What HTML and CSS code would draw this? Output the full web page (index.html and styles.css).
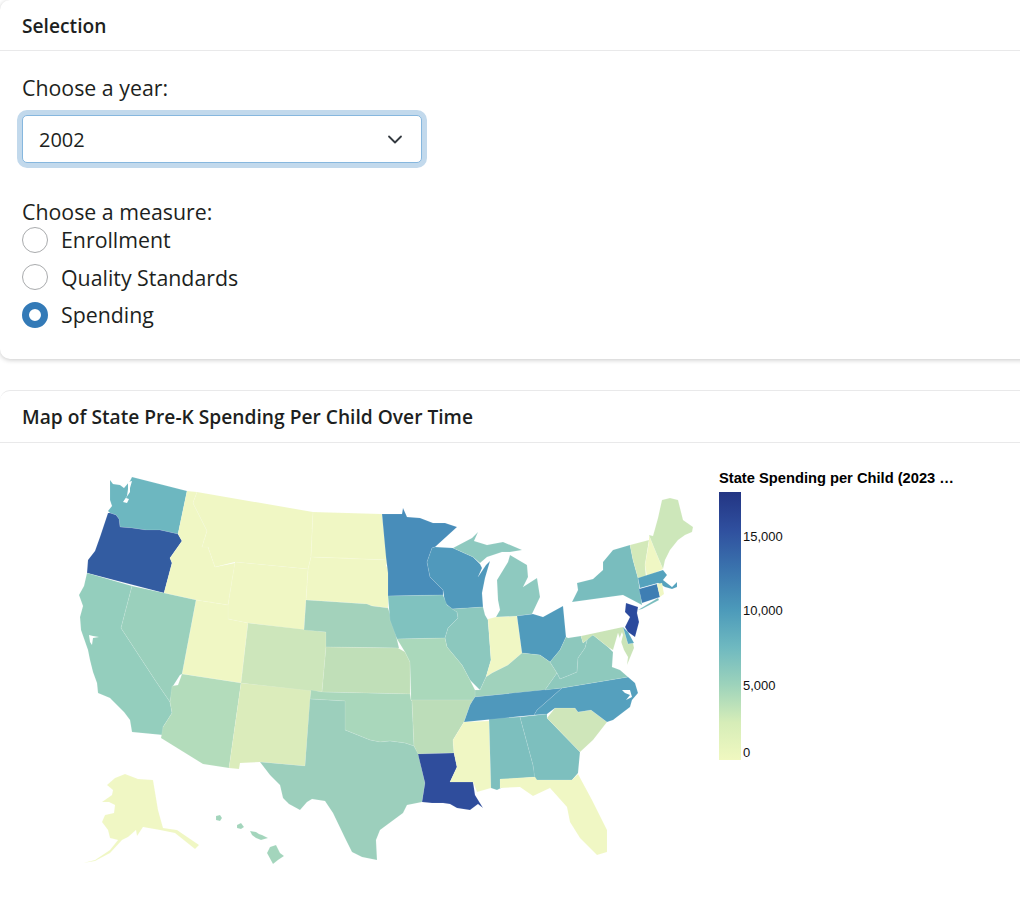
FILE: index.html
```html
<!DOCTYPE html>
<html lang="en">
<head>
    <meta charset="UTF-8">
    <title>State Pre-K Spending</title>
    <link rel="stylesheet" href="styles.css">
</head>
<body>

    <!-- Selection card -->
    <section class="card card-raised">
        <div class="card-header">Selection</div>
        <div class="card-body">
            <label class="field-label" for="year">Choose a year:</label>
            <div class="select-box" id="year">
                <span>2002</span>
                <svg class="chevron" viewBox="0 0 16 16"><path d="M2 5.500l6 6 6-6"/></svg>
            </div>
            <div class="field-label measure-label">Choose a measure:</div>
            <div class="radio-row"><span class="radio"></span>Enrollment</div>
            <div class="radio-row"><span class="radio"></span>Quality Standards</div>
            <div class="radio-row"><span class="radio radio-on"></span>Spending</div>
        </div>
    </section>

    <!-- Map card -->
    <section class="card card-map">
        <div class="card-header">Map of State Pre-K Spending Per Child Over Time</div>
        <svg class="map" viewBox="0 443 1020 469" width="1020" height="469">
            <defs>
                <linearGradient id="ramp" x1="0" y1="1" x2="0" y2="0">
                    <stop offset="0" stop-color="#f0f8c0"/>
                    <stop offset="0.14" stop-color="#d6edb8"/>
                    <stop offset="0.28" stop-color="#9dd3bb"/>
                    <stop offset="0.42" stop-color="#6fb9c0"/>
                    <stop offset="0.56" stop-color="#4c9aba"/>
                    <stop offset="0.72" stop-color="#3a72ad"/>
                    <stop offset="0.86" stop-color="#2f4f9e"/>
                    <stop offset="1" stop-color="#233583"/>
                </linearGradient>
            </defs>

            <g class="states">
                <!-- west -->
                <path fill="#6db7c0" d="M110 480L113 484L120 485L124 488L130 481L132 477L187 491L178 534L160 530L146 530L132 528L120 527L119 519L116 515L110 513L108 511L112 506L110 500L110 493Z"/>
                <path fill="#335ca1" d="M108 513L110 513L116 515L119 519L120 527L132 528L146 530L160 530L178 534L182 541L170 558L172 563L164 593L87 573L88 560L95 551L100 537L104 525Z"/>
                <path fill="#f0f7c4" d="M187 491L197 492L193 503L207 531L202 547L208 547L215 567L235 563L228 605L196 600L164 593L172 563L170 558L182 541L178 534Z"/>
                <path fill="#f0f7c4" d="M197 492L313 512L311 557L308 569L235 562L215 567L208 547L202 547L207 531L193 503Z"/>
                <path fill="#f0f7c4" d="M313 512L382 514L385 540L388 560L311 557Z"/>
                <path fill="#f0f7c4" d="M311 557L388 560L386 566L389 568L388 608L380 607L372 606L367 604L306 600L308 569Z"/>
                <path fill="#f0f7c4" d="M235 562L308 569L306 600L304 630L248 623L228 619L228 605Z"/>
                <path fill="#f0f7c4" d="M196 600L228 605L228 619L248 623L241 683L182 674Z"/>
                <path fill="#94cebd" d="M87 573L132 586L121 628L155 680L170 702L172 713L163 727L163 735L132 732L130 720L124 712L110 698L98 693L97 683L93 672L90 660L88 650L81 630L80 617L83 606L79 595L84 586Z"/>
                <path fill="#9ad0bc" d="M132 586L196 600L182 674L180 675L173 686L170 702L155 680L121 628Z"/>
                <path fill="#b3dcbb" d="M182 674L241 683L229 768L203 764L161 738L163 727L172 713L170 702L172 686L178 685Z"/>
                <path fill="#dbecbb" d="M241 683L311 690L305 766L260 762L240 763L239 769L229 768Z"/>
                <path fill="#cde6bb" d="M248 623L326 632L326 647L322 692L241 683Z"/>
                <path fill="#a3d2bb" d="M306 600L367 604L372 606L380 607L388 608L393 623L399 648L326 647L326 632L304 630Z"/>
                <path fill="#c0dfb8" d="M326 647L398 648L405 652L410 662L410 694L322 692Z"/>
                <path fill="#a9d7bb" d="M311 690L322 692L410 694L411 700L412 701L414 746L405 743L390 741L380 742L370 740L360 736L345 730L345 701L310 699Z"/>
                <path fill="#9ccfbc" d="M310 699L345 701L345 730L360 736L370 740L380 742L390 741L405 743L414 746L418 753L425 783L422 802L407 805L403 813L380 830L376 840L377 860L362 857L352 852L345 838L333 813L325 801L312 799L307 802L300 810L289 804L283 798L280 785L270 775L260 762L305 766Z"/>

                <!-- alaska and hawaii -->
                <path fill="#f0f7c4" d="M107 785L115 778L125 774L138 779L153 780L158 810L163 828L177 830L199 845L195 849L175 833L160 830L143 827L137 836L136 830L128 837L122 840L110 853L95 861L83 863L95 860L110 850L118 840L110 838L108 830L102 822L105 815L114 813L115 805L109 802L102 802L112 795L113 790Z"/>
                <path fill="#a3d5bc" d="M216 816L220 815L222 818L220 821L216 820Z"/>
                <path fill="#a3d5bc" d="M237 825L241 823L244 827L241 829L237 828Z"/>
                <path fill="#a3d5bc" d="M250 831L256 832L259 834L262 835L268 838L261 840L256 838L252 835Z"/>
                <path fill="#a3d5bc" d="M270 847L276 845L280 853L284 856L278 860L273 864L267 853Z"/>

                <!-- midwest -->
                <path fill="#488dba" d="M382 514L402 514L403 508L407 517L420 518L433 523L445 523L457 527L435 547L432 548L427 562L430 577L443 590L443 595L388 596L388 573L386 557Z"/>
                <path fill="#5099bc" d="M435 547L453 548L473 557L480 564L482 568L478 577L486 565L490 561L485 578L482 593L483 607L452 609L445 603L443 590L430 577L427 562L432 548Z"/>
                <path fill="#80c2bf" d="M388 596L443 595L447 605L457 612L458 618L448 628L445 638L397 639L390 620Z"/>
                <path fill="#8cc8be" d="M452 609L483 607L485 615L488 620L491 660L486 677L480 690L470 680L462 665L447 647L445 638L448 628L458 618L457 612Z"/>
                <path fill="#f0f7c4" d="M488 619L496 617L517 616L522 653L508 665L492 673L486 677L491 660Z"/>
                <path fill="#8ec9bf" d="M453 548L472 538L478 532L474 541L487 545L503 542L522 550L510 552L502 552L487 557L480 563L473 557Z"/>
                <path fill="#8ec9bf" d="M510 555L527 565L528 577L523 587L537 578L540 597L532 614L517 616L496 617L500 610L498 600L497 580L508 562Z"/>
                <path fill="#509bbc" d="M517 616L533 614L543 617L563 606L566 637L560 650L550 662L540 655L522 653Z"/>
                <path fill="#a0d2bc" d="M492 673L508 665L522 653L540 655L550 662L557 673L545 690L475 697L475 690L480 690L486 677Z"/>
                <path fill="#aad8bb" d="M397 639L445 638L447 647L462 665L470 680L475 690L475 697L473 700L411 700L410 662L405 652Z"/>
                <path fill="#bcddb9" d="M411 700L473 700L470 705L464 722L453 740L454 753L418 754L414 746L412 701Z"/>

                <!-- south -->
                <path fill="#2f4d9c" d="M418 754L454 753L457 767L450 782L473 782L475 795L483 808L478 804L470 810L457 808L450 804L443 803L432 803L422 802L425 783Z"/>
                <path fill="#f0f7c4" d="M464 722L489 721L491 788L477 792L473 782L450 782L457 767L454 753L453 740Z"/>
                <path fill="#7dbfbe" d="M489 718L520 717L533 765L535 777L500 780L503 787L497 790L491 788Z"/>
                <path fill="#7dbfbe" d="M520 717L547 714L547 718L580 752L578 773L572 780L535 780L533 765Z"/>
                <path fill="#f0f7c4" d="M500 779L535 777L537 780L572 780L578 774L592 800L607 830L607 852L597 855L580 838L570 822L567 807L550 788L533 796L520 787L500 788Z"/>
                <path fill="#cfe6ba" d="M547 718L555 708L575 708L578 712L591 710L607 722L593 740L580 752Z"/>
                <path fill="#55a0be" d="M534 715L537 710L562 688L628 677L635 683L638 693L632 700L630 707L613 720L607 722L591 710L578 712L575 708L555 708L547 714Z"/>
                <path fill="#4f98bc" d="M473 700L475 697L562 688L537 710L534 715L464 722L470 705Z"/>

                <!-- east -->
                <path fill="#8dc8bd" d="M550 662L560 650L566 637L568 638L581 636L583 643L593 635L588 637L585 648L578 658L577 672L570 675L560 679L557 673Z"/>
                <path fill="#8ec9bd" d="M593 635L608 647L613 652L612 667L620 670L628 677L562 688L545 690L557 673L560 679L570 675L577 672L578 658L585 648L588 637Z"/>
                <path fill="#cae4b7" d="M581 636L623 627L628 644L633 643L634 648L627 665L628 657L624 650L618 633L613 650L608 647L593 635L583 643Z"/>
                <path fill="#5ba9c1" d="M623 627L628 632L634 643L628 644Z"/>
                <path fill="#79bdbe" d="M572 602L578 590L577 583L593 579L603 570L603 562L613 550L630 545L633 560L638 578L642 605L623 595Z"/>
                <path fill="#79bdbe" d="M638 610L658 598L659 600L642 609Z"/>
                <path fill="#d3e9b9" d="M630 545L649 540L645 565L646 577L638 578L633 560Z"/>
                <path fill="#f0f7c4" d="M649 535L655 550L663 569L647 577L645 565L649 542Z"/>
                <path fill="#cde7ba" d="M649 535L653 536L658 518L662 500L670 498L678 500L683 520L693 527L692 532L685 535L678 540L670 550L665 560L663 569L655 550Z"/>
                <path fill="#55a2bd" d="M638 578L663 570L667 575L663 580L672 587L677 582L677 587L672 589L665 587L658 583L640 588Z"/>
                <path fill="#3e7eb3" d="M639 589L657 584L660 597L642 603Z"/>
                <path fill="#f0f7c4" d="M657 584L662 583L664 594L660 597Z"/>
                <path fill="#2b4a9d" d="M626 603L638 607L637 613L639 622L635 637L628 632L625 627L630 617L625 612Z"/>
            </g>

            <!-- water cut out of the coast -->
            <g class="water">
                <path d="M128 482L132 481L130 488L130 492L126 498L129 499L127 503L123 502L127 496L128 489Z"/>
                <path d="M89 635L93 636L99 637L93 638L92 645L90 642Z"/>
                <path d="M622 632L618 642L616 648L620 655L624 662L627 668L625 657L620 647L623 635Z"/>
                <path d="M622 690L630 690L632 697L626 700L630 695L625 693Z"/>
            </g>

            <!-- legend -->
            <text class="legend-title" x="719" y="483">State Spending per Child (2023 …</text>
            <rect x="719" y="492" width="22" height="268" fill="url(#ramp)"/>
            <text class="legend-tick" x="743" y="541">15,000</text>
            <text class="legend-tick" x="743" y="615">10,000</text>
            <text class="legend-tick" x="743" y="690">5,000</text>
            <text class="legend-tick" x="743" y="757">0</text>
        </svg>
    </section>

</body>
</html>
```

FILE: styles.css
```css
* {
    margin: 0;
    padding: 0;
    box-sizing: border-box;
}

body {
    font-family: "Open Sans", Arial, sans-serif;
    color: #1d1f21;
    background: #fff;
    width: 1020px;
    height: 912px;
    overflow: hidden;
}

.card {
    width: 1040px;
    background: #fff;
    border: 1px solid #e9e9ea;
    border-left: none;
    border-radius: 10px;
}

.card-raised {
    height: 359px;
    border-top: none;
    border-bottom: none;
    box-shadow: 0 1px 5px rgba(0, 0, 0, 0.22);
}

.card-map {
    margin-top: 31px;
    border-bottom: none;
}

.card-header {
    height: 51px;
    padding-left: 22px;
    display: flex;
    align-items: center;
    font-size: 19.2px;
    font-weight: 600;
    border-bottom: 1px solid #e9e9ea;
}

.card-map .card-header {
    height: 52px;
}

.card-body {
    padding: 23px 22px 0;
}

.field-label {
    display: block;
    font-size: 21.33px;
    line-height: 28px;
}

.select-box {
    width: 400px;
    height: 48px;
    margin-top: 13px;
    padding: 0 18px 0 16px;
    display: flex;
    align-items: center;
    justify-content: space-between;
    font-size: 20px;
    background: #fff;
    border: 1px solid #86b7de;
    border-radius: 5px;
    box-shadow: 0 0 0 5px #c2d9ec;
}

.chevron {
    width: 16px;
    height: 16px;
    fill: none;
    stroke: #343a40;
    stroke-width: 1.8;
    stroke-linecap: round;
    stroke-linejoin: round;
}

.measure-label {
    margin-top: 39px;
    margin-bottom: -1px;
    line-height: 20px;
}

.radio-row {
    height: 37.5px;
    display: flex;
    align-items: center;
    gap: 13px;
    font-size: 21.33px;
}

.radio {
    width: 26px;
    height: 26px;
    border: 1px solid #a9abad;
    border-radius: 50%;
    background: #fff;
}

.radio-on {
    border: 7.500px solid #337ab7;
}

.map {
    display: block;
}

.states path {
    stroke: #fff;
    stroke-opacity: 0.2;
    stroke-width: 0.5;
}

.water path {
    fill: #fff;
}

.legend-title {
    font-family: "Liberation Sans", Arial, sans-serif;
    font-size: 14.7px;
    font-weight: 700;
    fill: #000;
}

.legend-tick {
    font-family: "Liberation Sans", Arial, sans-serif;
    font-size: 13px;
    fill: #111;
}
```
